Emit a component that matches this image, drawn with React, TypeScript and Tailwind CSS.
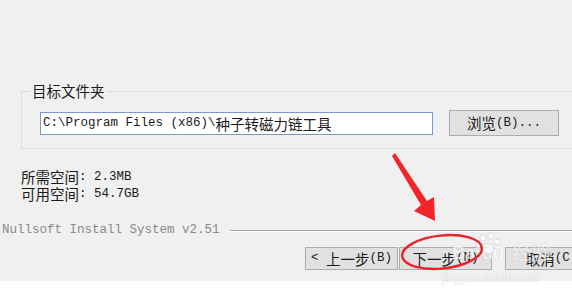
import React from "react";

const cjk = { fontFamily: '"Noto Sans CJK SC", sans-serif' } as const;
const mono = { fontFamily: '"Liberation Mono", "Noto Sans CJK SC", monospace' } as const;

function C({ children, className = "" }: { children: React.ReactNode; className?: string }) {
  return (
    <span className={"text-[14.5px] " + className} style={cjk}>
      {children}
    </span>
  );
}
function L({ children, className = "" }: { children: React.ReactNode; className?: string }) {
  return (
    <span className={"text-[12.5px] " + className} style={mono}>
      {children}
    </span>
  );
}

function Btn({ children, className = "" }: { children: React.ReactNode; className?: string }) {
  return (
    <div
      className={
        "h-[23px] shrink-0 border border-[#adadad] bg-[#e1e1e1] flex items-center justify-center leading-[21px] text-[#1a1a1a] whitespace-pre " +
        className
      }
    >
      {children}
    </div>
  );
}

export default function App() {
  return (
    <div className="relative w-[572px] h-[295px] overflow-hidden bg-white">
      <div className="h-[281px] bg-[#f0f0f0] flex flex-col">
        <div className="h-[82px] shrink-0" />
        <fieldset className="ml-[21px] w-[620px] border border-[#dcdcdc] pb-[12px]">
          <legend className="ml-[8px] px-[2px] leading-[18px] text-[#1a1a1a]">
            <C>目标文件夹</C>
          </legend>
          <div className="ml-[18px] mt-[10px] flex items-center">
            <div className="h-[23px] w-[393px] border border-[#7a9cc9] bg-white flex items-center pl-[2px] leading-[21px] text-[#1a1a1a] whitespace-nowrap">
              <L>C:\Program Files (x86)\</L>
              <C>种子转磁力链工具</C>
            </div>
            <div className="ml-[16px] h-[26px] w-[110px] border border-[#adadad] bg-[#e1e1e1] flex items-center justify-center leading-[24px] text-[#1a1a1a]">
              <C>浏览</C>
              <L>(B)...</L>
            </div>
          </div>
        </fieldset>
        <div className="ml-[21px] mt-[19px] flex flex-col text-[#1a1a1a]">
          <div className="h-[17px] flex items-center whitespace-pre">
            <C className="leading-[16px]">所需空间</C>
            <L className="leading-[16px]">: 2.3MB</L>
          </div>
          <div className="h-[17px] flex items-center whitespace-pre">
            <C className="leading-[16px]">可用空间</C>
            <L className="leading-[16px]">: 54.7GB</L>
          </div>
        </div>
        <div className="mt-[19px] h-[14px] flex items-center">
          <div className="ml-[2px] leading-[14px] text-[#8a8a8a] whitespace-nowrap">
            <L>Nullsoft Install System v2.51</L>
          </div>
          <div className="ml-[10px] mt-[5px] flex-1 flex flex-col">
            <div className="h-px bg-[#a0a0a0]" />
            <div className="h-px bg-white" />
          </div>
        </div>
        <div className="mt-[12px] ml-[305px] flex">
          <Btn className="w-[93px]">
            <L>{"< "}</L>
            <C>上一步</C>
            <L>(B)</L>
          </Btn>
          <Btn className="ml-[1px] w-[93px]">
            <C>下一步</C>
            <L>(N)</L>
          </Btn>
          <Btn className="ml-[13px] w-[93px]">
            <C>取消</C>
            <L>(C)</L>
          </Btn>
        </div>
      </div>

      {/* watermark */}
      <div
        className="pointer-events-none absolute left-[452px] top-[241px] flex items-end gap-[2px] text-white opacity-60"
        style={{ fontFamily: '"Liberation Sans", sans-serif', textShadow: "0 0 1px #9a9a9a" }}
      >
        <span className="text-[18px] font-bold leading-[20px]">Bai</span>
        <span className="text-[18px] font-bold leading-[20px]">du</span>
        <span className="ml-[6px] text-[20px] leading-[22px]" style={{ ...cjk, textShadow: "0 0 1px #9a9a9a" }}>
          经验
        </span>
      </div>
      <div
        className="pointer-events-none absolute left-[442px] top-[272px] text-[12px] leading-[12px] text-white opacity-80"
        style={{ fontFamily: '"Liberation Sans", sans-serif', textShadow: "0 0 1px #a8a8a8" }}
      >
        jingyan.baidu.com
      </div>

      {/* red annotation */}
      <svg className="pointer-events-none absolute left-0 top-0" width="572" height="295" viewBox="0 0 572 295">
        <g fill="#ffffff" opacity="0.7" stroke="#b8b8b8" strokeWidth="0.6">
          <circle cx="483" cy="238" r="3.2" />
          <circle cx="491" cy="236" r="3.2" />
          <circle cx="497" cy="242" r="3" />
          <circle cx="479" cy="245" r="3" />
          <ellipse cx="488" cy="249" rx="6" ry="5" />
        </g>
        <polygon points="392,156 395,153 427,201 434,197 435,221 414,211 421,205" fill="#f2262a" />
        <ellipse
          cx="442"
          cy="252"
          rx="40"
          ry="16.5"
          fill="none"
          stroke="#e8232a"
          strokeWidth="2.4"
          transform="rotate(-6 442 252)"
        />
      </svg>
    </div>
  );
}
